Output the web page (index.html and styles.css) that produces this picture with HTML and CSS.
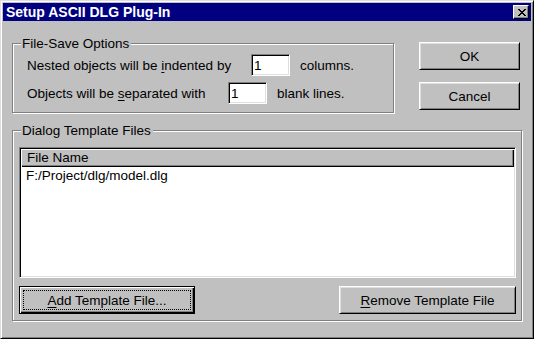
FILE: index.html
```html
<!DOCTYPE html>
<html lang="en">
<head>
    <meta charset="UTF-8">
    <meta name="viewport" content="width=device-width, initial-scale=1.0">
    <title>Setup ASCII DLG Plug-In</title>
    <link rel="stylesheet" href="styles.css">
</head>
<body>
    <div class="window">
        <div class="titlebar">
            <span class="title">Setup ASCII DLG Plug-In</span>
            <button type="button" class="close-button" aria-label="Close">
                <svg width="8" height="7" viewBox="0 0 8 7" shape-rendering="crispEdges">
                    <path d="M0 0h2v1h-2z M6 0h2v1h-2z M1 1h2v1h-2z M5 1h2v1h-2z M2 2h4v1h-4z M3 3h2v1h-2z M2 4h4v1h-4z M1 5h2v1h-2z M5 5h2v1h-2z M0 6h2v1h-2z M6 6h2v1h-2z" fill="#000"/>
                </svg>
            </button>
        </div>
        <div class="dialog-body">
            <div class="top-row">
                <fieldset class="group options-group">
                    <legend>File-Save Options</legend>
                    <div class="option-row">
                        <label for="indent" class="label-indent">Nested objects will be <u>i</u>ndented by</label>
                        <input type="text" id="indent" class="num-input" value="1">
                        <span class="unit">columns.</span>
                    </div>
                    <div class="option-row">
                        <label for="separate" class="label-separate">Objects will be <u>s</u>eparated with</label>
                        <input type="text" id="separate" class="num-input" value="1">
                        <span class="unit">blank lines.</span>
                    </div>
                </fieldset>
                <div class="side-buttons">
                    <button type="button" class="win-button">OK</button>
                    <button type="button" class="win-button">Cancel</button>
                </div>
            </div>
            <fieldset class="group templates-group">
                <legend>Dialog Template Files</legend>
                <div class="listview">
                    <div class="lv-header">File Name</div>
                    <div class="lv-item">F:/Project/dlg/model.dlg</div>
                </div>
                <div class="list-buttons">
                    <button type="button" class="win-button default-button add-button"><u>A</u>dd Template File...</button>
                    <button type="button" class="win-button remove-button"><u>R</u>emove Template File</button>
                </div>
            </fieldset>
        </div>
    </div>
</body>
</html>
```

FILE: styles.css
```css
* {
    box-sizing: border-box;
}
body {
    margin: 0;
    font-family: "Liberation Sans", Arial, sans-serif;
    font-size: 13.5px;
    color: #000;
    background-color: #c0c0c0;
}
u {
    text-decoration: underline;
    text-underline-offset: 2px;
}
.window {
    width: 534px;
    height: 339px;
    padding: 2px;
    background-color: #c0c0c0;
    border: 1px solid;
    border-color: #dfdfdf #000 #000 #dfdfdf;
    box-shadow: inset 1px 1px 0 #fff, inset -1px -1px 0 #808080;
}
.titlebar {
    display: flex;
    align-items: center;
    justify-content: space-between;
    height: 18px;
    padding: 0 2px 0 3px;
    background-color: #000080;
}
.title {
    color: #fff;
    font-weight: bold;
    font-size: 14px;
    line-height: 18px;
}
.close-button {
    display: flex;
    align-items: center;
    justify-content: center;
    width: 16px;
    height: 14px;
    padding: 0 0 0 1px;
    background-color: #c0c0c0;
    border: 1px solid;
    border-color: #fff #000 #000 #fff;
    box-shadow: inset -1px -1px 0 #808080;
}
.dialog-body {
    padding: 0 9px;
}
.top-row {
    display: flex;
    align-items: flex-start;
}
.group {
    margin: 0;
    border: 1px solid #808080;
    box-shadow: inset 1px 1px 0 #fff, 1px 1px 0 #fff;
    min-width: 0;
}
.group legend {
    padding: 0 2px 0 1px;
    line-height: 15px;
    background-color: #c0c0c0;
}
.options-group {
    width: 382px;
    margin-top: 15px;
    padding: 3px 8px 8px 14px;
}
.options-group legend {
    margin-left: -6px;
}
.option-row {
    display: flex;
    align-items: center;
    height: 22px;
}
.option-row + .option-row {
    margin-top: 6px;
}
.label-indent {
    width: 224px;
}
.label-separate {
    width: 201px;
}
.num-input {
    width: 39px;
    height: 22px;
    padding: 0 2px;
    font-family: inherit;
    font-size: 13.5px;
    background-color: #fff;
    border: 1px solid;
    border-color: #808080 #fff #fff #808080;
    box-shadow: inset 1px 1px 0 #000, inset -1px -1px 0 #dfdfdf;
    outline: none;
}
.unit {
    margin-left: 10px;
}
.side-buttons {
    display: flex;
    flex-direction: column;
    gap: 12px;
    width: 101px;
    margin-top: 21px;
    margin-left: 25px;
}
.win-button {
    height: 28px;
    padding: 0;
    font-family: inherit;
    font-size: 13.5px;
    color: #000;
    background-color: #c0c0c0;
    border: 1px solid;
    border-color: #fff #000 #000 #fff;
    box-shadow: inset 1px 1px 0 #dfdfdf, inset -1px -1px 0 #808080;
}
.default-button {
    border-color: #000;
    box-shadow: inset 1px 1px 0 #fff, inset -1px -1px 0 #000, inset -2px -2px 0 #808080;
    outline: 1px dotted #000;
    outline-offset: -5px;
}
.templates-group {
    width: 510px;
    margin-top: 10px;
    padding: 9px 5px 6px 6px;
}
.templates-group legend {
    margin-left: 2px;
}
.listview {
    height: 131px;
    background-color: #fff;
    border: 1px solid;
    border-color: #808080 #fff #fff #808080;
    box-shadow: inset 1px 1px 0 #000, inset -1px -1px 0 #dfdfdf;
    padding: 1px;
}
.lv-header {
    height: 18px;
    line-height: 18px;
    padding-left: 6px;
    background-color: #c0c0c0;
    box-shadow: inset 1px 1px 0 #fff, inset -1px -1px 0 #000, inset -2px -2px 0 #808080;
}
.lv-item {
    line-height: 16px;
    padding: 1px 0 0 5px;
}
.list-buttons {
    display: flex;
    justify-content: space-between;
    margin-top: 8px;
}
.add-button {
    width: 176px;
}
.remove-button {
    width: 177px;
}
```
